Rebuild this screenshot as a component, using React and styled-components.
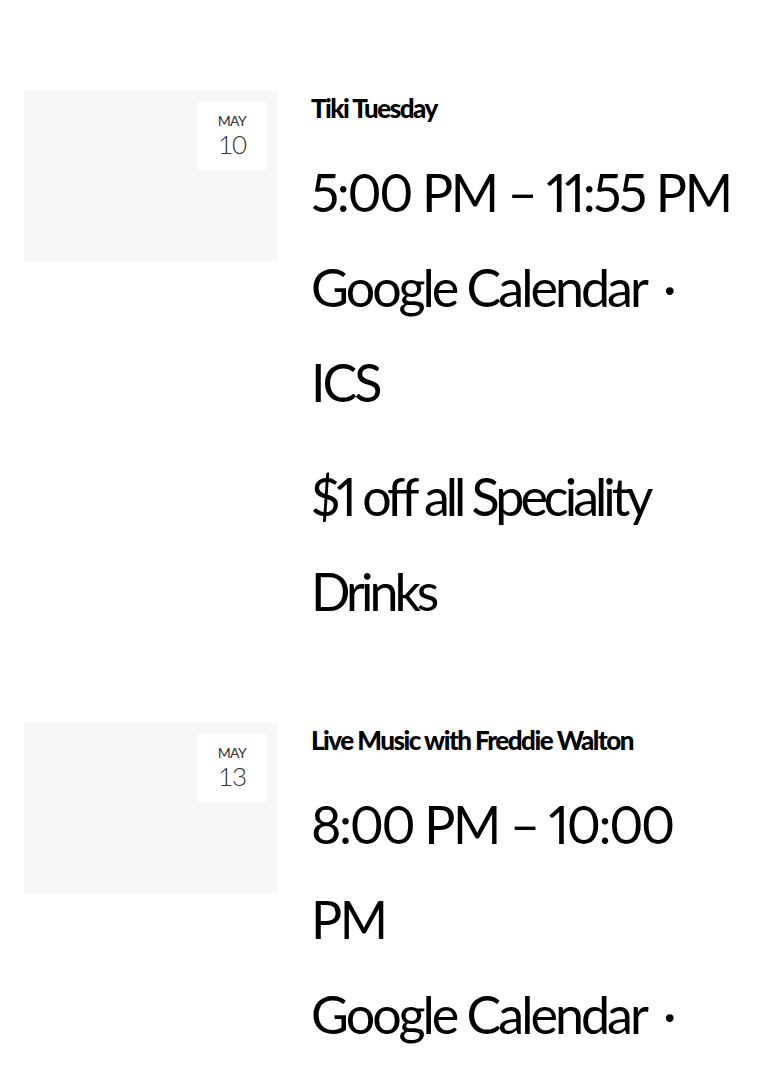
import React from "react";
import styled, { createGlobalStyle } from "styled-components";

const GlobalStyle = createGlobalStyle`
  html, body {
    margin: 0;
    padding: 0;
    background: #fff;
  }
  body {
    font-family: Lato, "Noto Sans", sans-serif;
    color: #000;
  }
`;

const Page = styled.div`
  display: flex;
  flex-direction: column;
  gap: 84px;
  padding: 91px 34px 0 24px;
`;

const Event = styled.article`
  display: grid;
  grid-template-columns: 253px 1fr;
  column-gap: 34px;
  align-items: start;
`;

const Thumb = styled.div`
  display: flex;
  justify-content: flex-end;
  height: 170px;
  padding: 10px;
  box-sizing: border-box;
  background: #f7f7f7;
`;

const DateBadge = styled.div`
  display: flex;
  flex-direction: column;
  align-items: center;
  justify-content: center;
  width: 70px;
  height: 70px;
  background: #fff;
  border-radius: 4px;
  color: #333;
`;

const Month = styled.span`
  font-size: 14px;
  line-height: 17px;
  letter-spacing: -0.5px;
  text-transform: uppercase;
`;

const Day = styled.span`
  font-size: 26px;
  font-weight: 300;
  line-height: 31px;
  letter-spacing: -1px;
`;

const Body = styled.div`
  display: flex;
  flex-direction: column;
  min-width: 0;
`;

const Title = styled.h3`
  margin: 2px 0 0 0;
  font-size: 26px;
  line-height: 30px;
  font-weight: 900;
  letter-spacing: -1.5px;
`;

const Big = styled.div`
  font-size: 52px;
  line-height: 95px;
  font-weight: 400;
  letter-spacing: ${(p) => p.$tracking || "-3px"};
  font-variant-numeric: proportional-nums;
`;

const Time = styled(Big)`
  margin-top: 22px;
`;

const Links = styled(Big)``;

const Link = styled.a`
  color: inherit;
  text-decoration: none;
`;

const Sep = styled.span`
  margin-left: 8px;
`;

const Description = styled(Big)`
  margin-top: 19px;
`;

const events = [
  {
    month: "May",
    day: "10",
    title: "Tiki Tuesday",
    start: "5:00 PM",
    end: "11:55 PM",
    description: "$1 off all Speciality Drinks",
  },
  {
    month: "May",
    day: "13",
    title: "Live Music with Freddie Walton",
    start: "8:00 PM",
    end: "10:00 PM",
    description: "",
  },
];

const EventItem = ({ ev }) => (
  <Event>
    <Thumb>
      <DateBadge>
        <Month>{ev.month}</Month>
        <Day>{ev.day}</Day>
      </DateBadge>
    </Thumb>
    <Body>
      <Title>{ev.title}</Title>
      <Time $tracking="-2.4px">{`${ev.start} – ${ev.end}`}</Time>
      <Links>
        <Link href="#">Google Calendar</Link> <Sep>·</Sep>{" "}
        <Link href="#">ICS</Link>
      </Links>
      {ev.description && (
        <Description $tracking="-4px">{ev.description}</Description>
      )}
    </Body>
  </Event>
);

const App = () => (
  <>
    <GlobalStyle />
    <Page>
      {events.map((ev) => (
        <EventItem key={ev.day} ev={ev} />
      ))}
    </Page>
  </>
);

export default App;
